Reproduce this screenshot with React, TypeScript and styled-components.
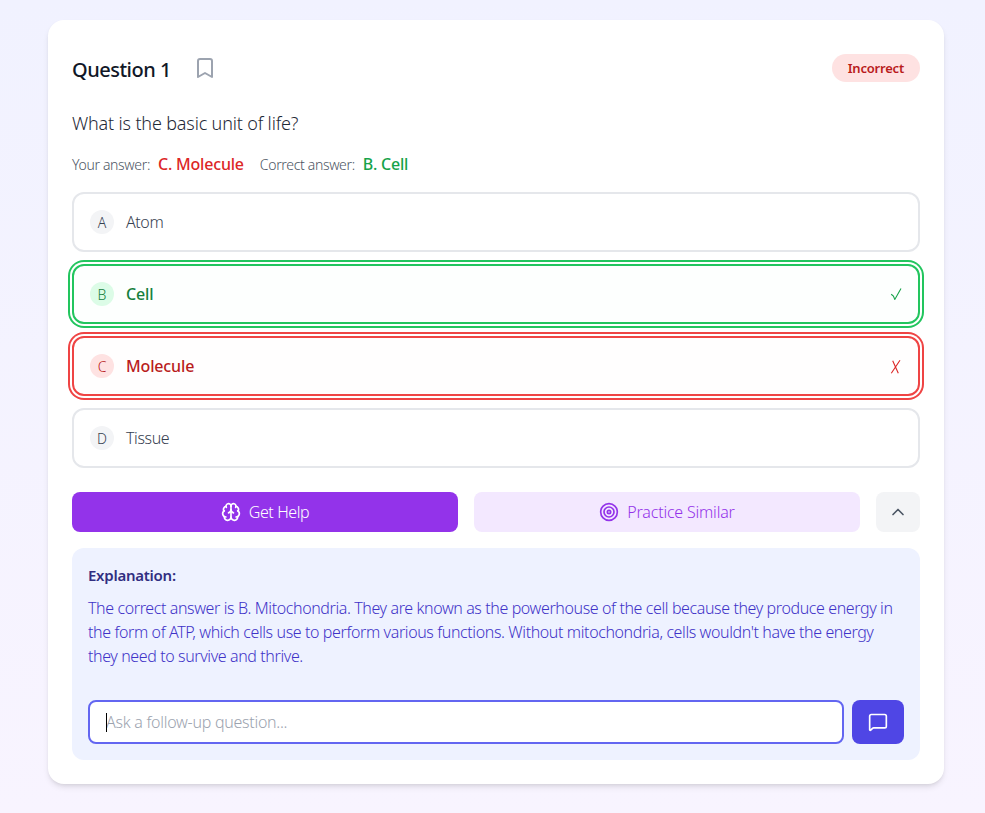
import React from 'react';
import styled, { createGlobalStyle } from 'styled-components';
import { Bookmark, Brain, ChevronUp, MessageSquare, Target } from 'lucide-react';

type OptionState = 'plain' | 'correct' | 'wrong';

const options: { letter: string; text: string; state: OptionState }[] = [
  { letter: 'A', text: 'Atom', state: 'plain' },
  { letter: 'B', text: 'Cell', state: 'correct' },
  { letter: 'C', text: 'Molecule', state: 'wrong' },
  { letter: 'D', text: 'Tissue', state: 'plain' },
];

const palette = {
  plain: { border: '#e5e7eb', bg: '#ffffff', badge: '#f3f4f6', badgeText: '#374151', text: '#374151', ring: 'none' },
  correct: { border: '#22c55e', bg: '#fdfffe', badge: '#dcfce7', badgeText: '#15803d', text: '#15803d', ring: '0 0 0 2px #fff, 0 0 0 4px #22c55e' },
  wrong: { border: '#ef4444', bg: '#fffefe', badge: '#fee2e2', badgeText: '#b91c1c', text: '#b91c1c', ring: '0 0 0 2px #fff, 0 0 0 4px #ef4444' },
};

function CheckMark() {
  return (
    <MarkSvg width="12" height="12" viewBox="0 0 12 12" stroke="#16a34a">
      <path d="M1.2 6.2 L3.4 8 L4.8 11.4 L11 0.4" />
    </MarkSvg>
  );
}

function CrossMark() {
  return (
    <MarkSvg width="12" height="16" viewBox="0 0 12 16" stroke="#dc2626">
      <path d="M2.7 2.7 L8.3 15.3 M10 2.3 L1.3 15.3" />
    </MarkSvg>
  );
}

export default function App() {
  return (
    <Page>
      <GlobalStyle />
      <Card>
        <Header>
          <TitleGroup>
            <Title>Question 1</Title>
            <BookmarkButton>
              <Bookmark size={24} strokeWidth={2} />
            </BookmarkButton>
          </TitleGroup>
          <StatusPill>Incorrect</StatusPill>
        </Header>
        <Prompt>What is the basic unit of life?</Prompt>
        <AnswerLine>
          <AnswerLabel>Your answer:</AnswerLabel>
          <AnswerValue $color="#dc2626">C. Molecule</AnswerValue>
          <AnswerLabel>Correct answer:</AnswerLabel>
          <AnswerValue $color="#16a34a">B. Cell</AnswerValue>
        </AnswerLine>
        <OptionList>
          {options.map((o) => (
            <OptionRow key={o.letter} $state={o.state}>
              <LetterBadge $state={o.state}>{o.letter}</LetterBadge>
              <OptionText $state={o.state}>{o.text}</OptionText>
              {o.state === 'correct' && <CheckMark />}
              {o.state === 'wrong' && <CrossMark />}
            </OptionRow>
          ))}
        </OptionList>
        <Actions>
          <HelpButton>
            <Brain size={20} strokeWidth={2} />
            Get Help
          </HelpButton>
          <PracticeButton>
            <Target size={20} strokeWidth={2} />
            Practice Similar
          </PracticeButton>
          <CollapseButton>
            <ChevronUp size={20} strokeWidth={2} />
          </CollapseButton>
        </Actions>
        <ExplanationPanel>
          <ExplanationTitle>Explanation:</ExplanationTitle>
          <ExplanationText>
            The correct answer is B. Mitochondria. They are known as the powerhouse of the cell because they produce
            energy in the form of ATP, which cells use to perform various functions. Without mitochondria, cells
            wouldn't have the energy they need to survive and thrive.
          </ExplanationText>
          <FollowUpRow>
            <InputWrap>
              <FollowUpInput placeholder="Ask a follow-up question..." />
              <Caret />
            </InputWrap>
            <SendButton>
              <MessageSquare size={20} strokeWidth={2} />
            </SendButton>
          </FollowUpRow>
        </ExplanationPanel>
      </Card>
    </Page>
  );
}

const GlobalStyle = createGlobalStyle`
  html, body {
    margin: 0;
    padding: 0;
  }
  body {
    font-family: 'Noto Sans', 'Open Sans', sans-serif;
  }
  * {
    box-sizing: border-box;
  }
`;

const Page = styled.div`
  min-height: 813px;
  padding: 20px 41px 29px 48px;
  background: linear-gradient(to bottom, #f1f2ff 0%, #f8f4ff 100%);
`;

const Card = styled.div`
  width: 896px;
  height: 764px;
  padding: 24px;
  background: #fff;
  border-radius: 16px;
  box-shadow: 0 4px 6px -1px rgba(0, 0, 0, 0.1), 0 2px 4px -2px rgba(0, 0, 0, 0.1);
`;

const Header = styled.div`
  display: flex;
  align-items: center;
  justify-content: space-between;
  height: 48px;
`;

const TitleGroup = styled.div`
  display: flex;
  align-items: center;
  gap: 14px;
`;

const Title = styled.h2`
  margin: 4px 0 0;
  font-size: 20px;
  font-weight: 500;
  line-height: 28px;
  letter-spacing: -0.5px;
  color: #111827;
`;

const BookmarkButton = styled.div`
  display: flex;
  padding: 8px;
  color: #9ca3af;
`;

const StatusPill = styled.span`
  display: flex;
  align-items: center;
  height: 28px;
  padding: 0 16px;
  border-radius: 14px;
  background: #fee2e2;
  color: #b91c1c;
  font-size: 13px;
  font-weight: 600;
  letter-spacing: -0.2px;
`;

const Prompt = styled.p`
  margin: 17px 0 0;
  font-size: 18px;
  font-weight: 300;
  line-height: 28px;
  letter-spacing: -0.16px;
  color: #1f2937;
`;

const AnswerLine = styled.div`
  display: flex;
  align-items: center;
  height: 20px;
  margin-top: 17px;
`;

const AnswerLabel = styled.span`
  font-size: 14px;
  font-weight: 300;
  letter-spacing: -0.33px;
  color: #4b5563;
  margin-right: 8px;
`;

const AnswerValue = styled.span<{ $color: string }>`
  font-size: 16px;
  font-weight: 500;
  letter-spacing: -0.2px;
  color: ${(p) => p.$color};
  margin-right: 16px;
`;

const OptionList = styled.div`
  display: flex;
  flex-direction: column;
  gap: 12px;
  margin-top: 18px;
`;

const OptionRow = styled.div<{ $state: OptionState }>`
  display: flex;
  align-items: center;
  height: 60px;
  padding: 0 16px;
  border: 2px solid ${(p) => palette[p.$state].border};
  border-radius: 12px;
  background: ${(p) => palette[p.$state].bg};
  box-shadow: ${(p) => palette[p.$state].ring};
`;

const LetterBadge = styled.span<{ $state: OptionState }>`
  display: flex;
  align-items: center;
  justify-content: center;
  width: 24px;
  height: 24px;
  margin-right: 12px;
  border-radius: 50%;
  font-size: 14px;
  font-weight: 300;
  background: ${(p) => palette[p.$state].badge};
  color: ${(p) => palette[p.$state].badgeText};
`;

const OptionText = styled.span<{ $state: OptionState }>`
  flex: 1;
  font-size: 16px;
  font-weight: ${(p) => (p.$state === 'plain' ? 300 : 500)};
  letter-spacing: ${(p) => (p.$state === 'plain' ? '-0.4px' : '-0.15px')};
  color: ${(p) => palette[p.$state].text};
`;

const MarkSvg = styled.svg`
  fill: none;
  stroke-width: 1.1;
`;

const Actions = styled.div`
  display: flex;
  gap: 16px;
  margin-top: 24px;
`;

const ActionButton = styled.button`
  flex: 1;
  display: flex;
  align-items: center;
  justify-content: center;
  gap: 8px;
  height: 40px;
  border: none;
  border-radius: 8px;
  font-family: inherit;
  font-size: 16px;
  font-weight: 300;
`;

const HelpButton = styled(ActionButton)`
  background: #9333ea;
  color: #fff;
  letter-spacing: -0.4px;
`;

const PracticeButton = styled(ActionButton)`
  background: #f3e8ff;
  color: #9333ea;
  letter-spacing: -0.2px;
`;

const CollapseButton = styled.button`
  display: flex;
  align-items: center;
  justify-content: center;
  width: 44px;
  height: 40px;
  border: none;
  border-radius: 8px;
  background: #f3f4f6;
  color: #4b5563;
`;

const ExplanationPanel = styled.div`
  margin-top: 16px;
  padding: 16px;
  height: 212px;
  border-radius: 12px;
  background: #eef2ff;
`;

const ExplanationTitle = styled.div`
  font-size: 15px;
  font-weight: 600;
  line-height: 22px;
  letter-spacing: -0.25px;
  color: #312e81;
`;

const ExplanationText = styled.p`
  margin: 10px 0 0;
  font-size: 16px;
  font-weight: 300;
  line-height: 24px;
  letter-spacing: -0.39px;
  color: #3f33c8;
`;

const FollowUpRow = styled.div`
  display: flex;
  gap: 8px;
  margin-top: 32px;
`;

const InputWrap = styled.div`
  position: relative;
  flex: 1;
`;

const FollowUpInput = styled.input`
  display: block;
  width: 100%;
  height: 44px;
  padding: 0 16px;
  border: 2px solid #6366f1;
  border-radius: 8px;
  outline: none;
  background: #fff;
  font-family: inherit;
  font-size: 16px;
  font-weight: 300;
  letter-spacing: -0.27px;
  &::placeholder {
    color: #9ca3af;
  }
`;

const Caret = styled.span`
  position: absolute;
  left: 18px;
  top: 13px;
  width: 1px;
  height: 19px;
  background: #000;
`;

const SendButton = styled.button`
  display: flex;
  align-items: center;
  justify-content: center;
  width: 52px;
  height: 44px;
  border: none;
  border-radius: 8px;
  background: #4f46e5;
  color: #fff;
`;
